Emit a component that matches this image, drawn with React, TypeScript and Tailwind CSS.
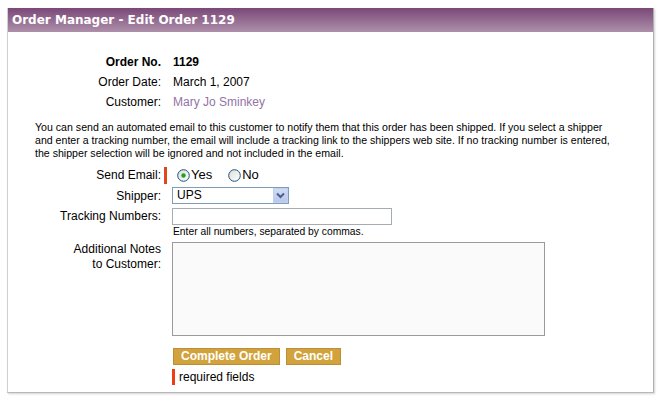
import React from "react";

function Radio({ checked }: { checked?: boolean }) {
  return (
    <svg width="13" height="13" viewBox="0 0 13 13" className="shrink-0">
      <defs>
        <linearGradient id={checked ? "rg1" : "rg2"} x1="0" y1="0" x2="1" y2="1">
          <stop offset="0" stopColor="#dcdcd6" />
          <stop offset="1" stopColor="#ffffff" />
        </linearGradient>
      </defs>
      <circle cx="6.5" cy="6.5" r="5.8" fill={`url(#${checked ? "rg1" : "rg2"})`} stroke="#1c5180" strokeWidth="1" />
      {checked && <circle cx="6.5" cy="6.5" r="2.2" fill="#21a121" />}
    </svg>
  );
}

export default function App() {
  const sans = { fontFamily: '"Liberation Sans", Arial, sans-serif' };
  return (
    <div className="w-[661px] h-[402px] bg-white pt-[8px] pl-[7px]" style={sans}>
      <div className="w-[647px] h-[385px] bg-white border-l border-l-[#d0d0d0] border-r border-r-[#b0b0b0] border-b border-b-[#b8b8b8] shadow-[1px_1px_2px_rgba(0,0,0,0.18)] flex flex-col">
        <div
          className="h-[24px] bg-gradient-to-b from-[#7a4878] to-[#ad90aa] text-white font-bold text-[12px] pl-[4px] flex items-center"
          style={{ fontFamily: '"DejaVu Sans", Verdana, sans-serif' }}
        >
          Order Manager - Edit Order 1129
        </div>

        <div className="grid grid-cols-[153px_11px_1fr] text-[12px] text-black mt-[23px] leading-[15px]">
          <div className="text-right font-bold h-[20px]">Order No.</div>
          <div />
          <div className="font-bold pl-[1px]">1129</div>

          <div className="text-right h-[20px]">Order Date:</div>
          <div />
          <div className="pl-[1px]">March 1, 2007</div>

          <div className="text-right h-[20px]">Customer:</div>
          <div />
          <div className="pl-[1px] text-[#9373a6]">Mary Jo Sminkey</div>
        </div>

        <p className="text-[10.6px] leading-[13px] text-black pl-[27px] pr-[40px] mt-[6px]">
          You can send an automated email to this customer to notify them that this order has been shipped. If you select a shipper
          and enter a tracking number, the email will include a tracking link to the shippers web site. If no tracking number is entered,
          the shipper selection will be ignored and not included in the email.
        </p>

        <div className="grid grid-cols-[153px_11px_1fr] text-[12px] text-black mt-[5px]">
          <div className="text-right h-[20px] flex items-center justify-end">Send Email:</div>
          <div className="flex items-center pl-[3px]">
            <div className="w-[3px] h-[17px] bg-[#e2461c]" />
          </div>
          <div className="flex items-center h-[20px] text-[13px] pl-[5px]">
            <Radio checked />
            <span className="ml-[1px]">Yes</span>
            <span className="ml-[16px]"><Radio /></span>
            <span className="ml-[1px]">No</span>
          </div>

          <div className="text-right h-[21px] flex items-center justify-end">Shipper:</div>
          <div />
          <div className="flex items-center h-[21px]">
            <div className="w-[117px] h-[17px] border border-[#7f9db9] bg-white flex items-center justify-between text-[12px]">
              <span className="pl-[4px] leading-[15px]">UPS</span>
              <div className="w-[15px] h-[15px] bg-gradient-to-b from-[#d0dcf6] to-[#b7c8ee] border border-[#c3d1ef] flex items-center justify-center">
                <svg width="9" height="7" viewBox="0 0 9 7">
                  <path d="M1 1.5 L4.5 5 L8 1.5" fill="none" stroke="#4d6185" strokeWidth="2" />
                </svg>
              </div>
            </div>
          </div>

          <div className="text-right h-[20px] flex items-center justify-end">Tracking Numbers:</div>
          <div />
          <div className="flex items-center h-[20px]">
            <div className="w-[220px] h-[17px] border border-[#a5acb2] bg-white" />
          </div>

          <div />
          <div />
          <div className="text-[10.3px] leading-[12px] pl-[1px] h-[16px]">Enter all numbers, separated by commas.</div>

          <div className="text-right leading-[15px]">
            Additional Notes
            <br />
            to Customer:
          </div>
          <div />
          <div>
            <div className="w-[373px] h-[94px] border border-[#9a9a9a] bg-[#fafafa]" />
          </div>

          <div />
          <div />
          <div className="flex gap-[6px] mt-[12px] pl-[1px]">
            <button className="h-[17px] px-[7px] bg-[#d2a23c] border border-[#b99038] text-white font-bold text-[12px] leading-[15px]">
              Complete Order
            </button>
            <button className="h-[17px] px-[7px] bg-[#d2a23c] border border-[#b99038] text-white font-bold text-[12px] leading-[15px]">
              Cancel
            </button>
          </div>

          <div />
          <div />
          <div className="flex items-center mt-[4px] h-[16px]">
            <div className="w-[3px] h-[16px] bg-[#f03c14]" />
            <span className="ml-[4px]">required fields</span>
          </div>
        </div>
      </div>
    </div>
  );
}
